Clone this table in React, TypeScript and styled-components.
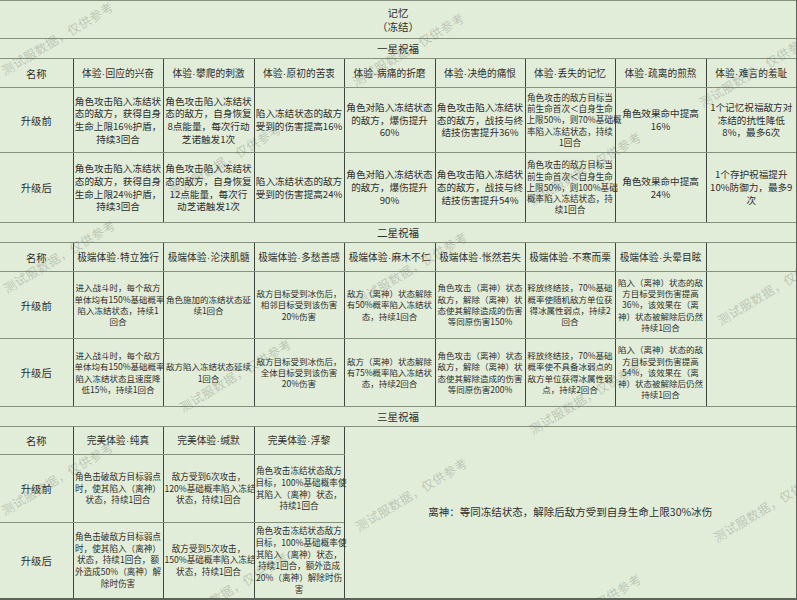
import React from 'react';
import styled, { createGlobalStyle } from 'styled-components';

const GlobalStyle = createGlobalStyle`
  html, body {
    margin: 0;
    padding: 0;
    background: #e2edd9;
  }
  body {
    font-family: "Noto Sans CJK SC", "Noto Sans", sans-serif;
    color: #2e2e2e;
  }
`;

const Page = styled.div`
  position: relative;
  width: 797px;
  height: 600px;
  overflow: hidden;
  background: #e2edd9;
`;

const Table = styled.table`
  width: 797px;
  border-collapse: collapse;
  table-layout: fixed;
  border-top: 1px solid #8d9889;
  border-right: 2px solid #5d625b;
  border-bottom: 2px solid #5d625b;
`;

const Row = styled.tr<{ $h: number }>`
  height: ${(p) => p.$h}px;
`;

const Cell = styled.td`
  padding: 0 1px;
  text-align: center;
  vertical-align: middle;
  white-space: pre;
  border-top: 1px solid #85917f;
  border-bottom: 1px solid #85917f;
  border-left: 1px solid #3f443d;
  border-right: 1px solid #3f443d;
`;

const TitleCell = styled(Cell)`
  font-size: 10.5px;
  line-height: 14px;
  border-left: none;
`;

const BandCell = styled(Cell)`
  font-size: 10.5px;
  line-height: 14px;
  border-left: none;
`;

const HeadCell = styled(Cell)`
  font-size: 9.7px;
  line-height: 12px;
`;

// the middle dot in the CJK font is full width; the reference uses a narrow one
const Dot = styled.span`
  font-family: "Liberation Sans", sans-serif;
  padding: 0 0.5px;
`;

const LabelCell = styled(Cell)`
  font-size: 10.3px;
  line-height: 13px;
  border-left: none;
`;

const BodyCell = styled(Cell)<{ $fs: number; $lh: number }>`
  font-size: ${(p) => p.$fs}px;
  line-height: ${(p) => p.$lh}px;
  overflow: visible;
`;

const NoteCell = styled(Cell)`
  font-size: 10.5px;
  line-height: 14px;
`;

const Watermark = styled.span`
  position: absolute;
  transform: translate(-50%, -50%) rotate(-31deg);
  font-size: 12.5px;
  letter-spacing: 0.3px;
  white-space: nowrap;
  color: rgba(95, 100, 92, 0.3);
  pointer-events: none;
`;

const widths = [73, 90, 91, 90, 91, 90, 90, 91, 91];

type Body = { t: string; small?: boolean };

const s1Heads = [
  '体验·回应的兴奋',
  '体验·攀爬的刺激',
  '体验·原初的苦衷',
  '体验·病痛的折磨',
  '体验·决绝的痛恨',
  '体验·丢失的记忆',
  '体验·疏离的煎熬',
  '体验·难言的羞耻',
];

const s1Before: Body[] = [
  { t: '角色攻击陷入冻结状\n态的敌方，获得自身\n生命上限16%护盾，\n持续3回合' },
  { t: '角色攻击陷入冻结状\n态的敌方，自身恢复\n8点能量，每次行动\n芝诺触发1次' },
  { t: '陷入冻结状态的敌方\n受到的伤害提高16%' },
  { t: '角色对陷入冻结状态\n的敌方，爆伤提升\n60%' },
  { t: '角色攻击陷入冻结状\n态的敌方，战技与终\n结技伤害提升36%' },
  { t: '角色攻击的敌方目标当\n前生命首次＜自身生命\n上限50%，则70%基础概\n率陷入冻结状态，持续\n1回合', small: true },
  { t: '角色效果命中提高\n16%' },
  { t: '1个记忆祝福敌方对\n冻结的抗性降低\n8%，最多6次' },
];

const s1After: Body[] = [
  { t: '角色攻击陷入冻结状\n态的敌方，获得自身\n生命上限24%护盾，\n持续3回合' },
  { t: '角色攻击陷入冻结状\n态的敌方，自身恢复\n12点能量，每次行\n动芝诺触发1次' },
  { t: '陷入冻结状态的敌方\n受到的伤害提高24%' },
  { t: '角色对陷入冻结状态\n的敌方，爆伤提升\n90%' },
  { t: '角色攻击陷入冻结状\n态的敌方，战技与终\n结技伤害提升54%' },
  { t: '角色攻击的敌方目标当\n前生命首次＜自身生命\n上限50%，则100%基础\n概率陷入冻结状态，持\n续1回合', small: true },
  { t: '角色效果命中提高\n24%' },
  { t: '1个存护祝福提升\n10%防御力，最多9\n次' },
];

const s2Heads = [
  '极端体验·特立独行',
  '极端体验·沦浃肌髓',
  '极端体验·多愁善感',
  '极端体验·麻木不仁',
  '极端体验·怅然若失',
  '极端体验·不寒而栗',
  '极端体验·头晕目眩',
  '',
];

const s2Before: Body[] = [
  { t: '进入战斗时，每个敌方\n单体均有150%基础概率\n陷入冻结状态，持续1\n回合' },
  { t: '角色施加的冻结状态延\n续1回合' },
  { t: '敌方目标受到冰伤后，\n相邻目标受到该伤害\n20%伤害' },
  { t: '敌方（离神）状态解除\n有50%概率陷入冻结状\n态，持续1回合' },
  { t: '角色攻击（离神）状态\n敌方，解除（离神）状\n态使其解除造成的伤害\n等同原伤害150%' },
  { t: '释放终结技，70%基础\n概率使随机敌方单位获\n得冰属性弱点，持续2\n回合' },
  { t: '陷入（离神）状态的敌\n方目标受到伤害提高\n36%，该效果在（离\n神）状态被解除后仍然\n持续1回合' },
  { t: '' },
];

const s2After: Body[] = [
  { t: '进入战斗时，每个敌方\n单体均有150%基础概率\n陷入冻结状态且速度降\n低15%，持续1回合' },
  { t: '敌方陷入冻结状态延续\n1回合' },
  { t: '敌方目标受到冰伤后，\n全体目标受到该伤害\n20%伤害' },
  { t: '敌方（离神）状态解除\n有75%概率陷入冻结状\n态，持续2回合' },
  { t: '角色攻击（离神）状态\n敌方，解除（离神）状\n态使其解除造成的伤害\n等同原伤害200%' },
  { t: '释放终结技，70%基础\n概率使不具备冰弱点的\n敌方单位获得冰属性弱\n点，持续2回合' },
  { t: '陷入（离神）状态的敌\n方目标受到伤害提高\n54%，该效果在（离\n神）状态被解除后仍然\n持续1回合' },
  { t: '' },
];

const s3Heads = ['完美体验·纯真', '完美体验·缄默', '完美体验·浮黎'];

const s3Before: Body[] = [
  { t: '角色击破敌方目标弱点\n时，使其陷入（离神）\n状态，持续1回合' },
  { t: '敌方受到6次攻击，\n120%基础概率陷入冻结\n状态，持续1回合' },
  { t: '角色攻击冻结状态敌方\n目标，100%基础概率使\n其陷入（离神）状态，\n持续1回合' },
];

const s3After: Body[] = [
  { t: '角色击破敌方目标弱点\n时，使其陷入（离神）\n状态，持续1回合，额\n外造成50%（离神）解\n除时伤害' },
  { t: '敌方受到5次攻击，\n150%基础概率陷入冻结\n状态，持续1回合' },
  { t: '角色攻击冻结状态敌方\n目标，100%基础概率使\n其陷入（离神）状态，\n持续1回合，额外造成\n20%（离神）解除时伤\n害' },
];

// watermark centres, read off the screenshot
const marks: [number, number][] = [
  [57, 38], [408, 49], [755, 70],
  [225, 160], [585, 168],
  [59, 256], [411, 268], [773, 288],
  [235, 375], [585, 397],
  [57, 478], [411, 494], [769, 505],
  [232, 588], [585, 610],
];

const Head: React.FC<{ text: string }> = ({ text }) => {
  const [a, b] = text.split('·');
  return (
    <HeadCell>
      {b === undefined ? a : (
        <>
          {a}
          <Dot>·</Dot>
          {b}
        </>
      )}
    </HeadCell>
  );
};

const renderBody = (cells: Body[], fs: number, lh: number, smallFs = 8.6, smallLh = 11.2) =>
  cells.map((c, i) => (
    <BodyCell key={i} $fs={c.small ? smallFs : fs} $lh={c.small ? smallLh : lh}>
      {c.t}
    </BodyCell>
  ));

const App: React.FC = () => {
  return (
    <>
      <GlobalStyle />
      <Page>
        <Table>
          <colgroup>
            {widths.map((w, i) => (
              <col key={i} style={{ width: w }} />
            ))}
          </colgroup>
          <tbody>
            <Row $h={38}>
              <TitleCell colSpan={9}>{'记忆\n（冻结）'}</TitleCell>
            </Row>

            <Row $h={20}>
              <BandCell colSpan={9}>一星祝福</BandCell>
            </Row>
            <Row $h={29}>
              <LabelCell>名称</LabelCell>
              {s1Heads.map((h) => (
                <Head key={h} text={h} />
              ))}
            </Row>
            <Row $h={65}>
              <LabelCell>升级前</LabelCell>
              {renderBody(s1Before, 9.6, 12.7)}
            </Row>
            <Row $h={70}>
              <LabelCell>升级后</LabelCell>
              {renderBody(s1After, 9.6, 12.7)}
            </Row>

            <Row $h={20}>
              <BandCell colSpan={9}>二星祝福</BandCell>
            </Row>
            <Row $h={29}>
              <LabelCell>名称</LabelCell>
              {s2Heads.map((h, i) => (
                <Head key={i} text={h} />
              ))}
            </Row>
            <Row $h={67}>
              <LabelCell>升级前</LabelCell>
              {renderBody(s2Before, 8.5, 11.3)}
            </Row>
            <Row $h={68}>
              <LabelCell>升级后</LabelCell>
              {renderBody(s2After, 8.5, 11.3)}
            </Row>

            <Row $h={20}>
              <BandCell colSpan={9}>三星祝福</BandCell>
            </Row>
            <Row $h={28}>
              <LabelCell>名称</LabelCell>
              {s3Heads.map((h) => (
                <Head key={h} text={h} />
              ))}
              <NoteCell rowSpan={3} colSpan={5}>
                离神：等同冻结状态，解除后敌方受到自身生命上限30%冰伤
              </NoteCell>
            </Row>
            <Row $h={68}>
              <LabelCell>升级前</LabelCell>
              {renderBody(s3Before, 8.6, 11.7)}
            </Row>
            <Row $h={76}>
              <LabelCell>升级后</LabelCell>
              {renderBody(s3After, 8.6, 11.7)}
            </Row>
          </tbody>
        </Table>
        {marks.map(([x, y], i) => (
          <Watermark key={i} style={{ left: x, top: y }}>
            测试服数据，仅供参考
          </Watermark>
        ))}
      </Page>
    </>
  );
};

export default App;
